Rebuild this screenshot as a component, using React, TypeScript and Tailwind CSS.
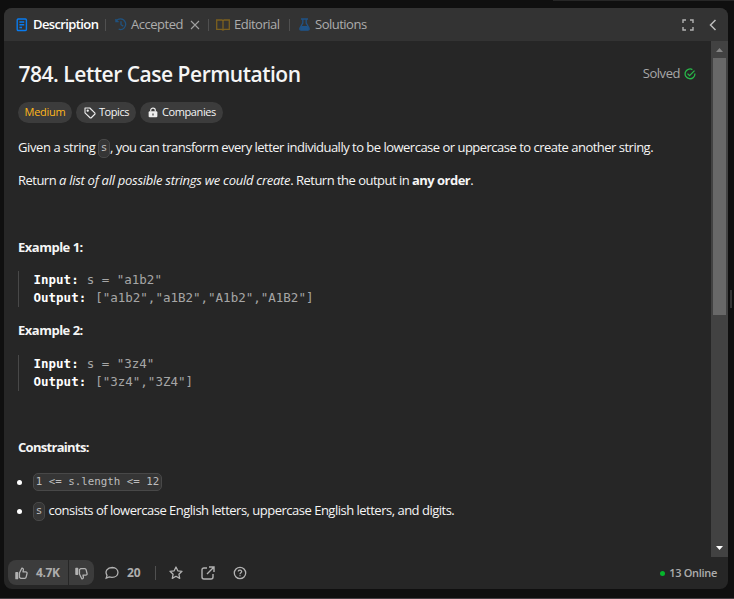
import type { ReactNode } from 'react';

const ui = "font-['Open_Sans','Noto_Sans',sans-serif]";

function Code({ children, wide }: { children: ReactNode; wide?: boolean }) {
  return (
    <code
      className={`inline-flex shrink-0 items-center justify-center rounded-[5px] border border-[#484848] bg-[#353535] font-['DejaVu_Sans_Mono',monospace] text-[10.8px] text-[#bdbdbd] ${wide ? 'h-[18px] w-[129px]' : 'h-[19px] w-3'}`}
    >
      {children}
    </code>
  );
}

function Divider() {
  return <span className="h-3 w-px shrink-0 bg-[#505050]" />;
}

function Example({ input, output }: { input: string; output: string }) {
  return (
    <pre className="h-9 border-l border-[#484848] pl-[14.5px] font-['DejaVu_Sans_Mono',monospace] text-[12.5px] leading-[18px] text-[#a6a6a6]">
      <span className="block"><b className="mr-2 text-white">Input:</b>{input}</span>
      <span className="block"><b className="mr-[9px] text-white">Output:</b>{output}</span>
    </pre>
  );
}

function Thumb() {
  return (
    <svg width="13" height="13" viewBox="0 0 14 14" fill="none" stroke="#b2b2b2" strokeWidth="1.4" strokeLinejoin="round">
      <path d="M1 6.2H2.8V12.6H1Z" fill="#b2b2b2" />
      <path d="M4.8 6.5 7.3 1.3C8.5 1.1 9.3 2 9 3.2L8.6 5.2H11.6C12.6 5.2 13.2 6 13 6.9L12 11C11.8 11.8 11.3 12.2 10.5 12.2H6.4L4.8 11.3Z" />
    </svg>
  );
}

export default function App() {
  return (
    <div className={`relative h-[599px] w-[734px] overflow-hidden border-b border-[#453f43] bg-[#0f0f0f] pl-1 pt-2 ${ui}`}>
      <div className="absolute left-[553px] top-0 h-px w-[181px] bg-[#262626]" />
      <div className="absolute left-[730px] top-[290px] h-[18px] w-[2px] bg-[#343434]" />
      <main className="flex h-[581px] w-[724px] flex-col overflow-hidden rounded-lg bg-[#262626] whitespace-nowrap">
        <header className="flex h-[33px] shrink-0 items-center bg-[#333] text-[13px] text-[#adadad]">
          <svg className="ml-3 shrink-0" width="12" height="14" viewBox="0 0 12 14" fill="none" stroke="#087bef" strokeWidth="1.4">
            <rect x="1.2" y="1" width="9.2" height="11.5" rx="1" />
            <path d="M3.4 4H8.2M3.4 6.8H8.2M3.4 9.5H6" />
          </svg>
          <span className="ml-[5px] w-[65px] font-semibold tracking-[-0.62px] text-white">Description</span>
          <span className="ml-[7px] flex"><Divider /></span>
          <svg className="ml-2 shrink-0" width="14" height="13" viewBox="0 0 15 14" fill="none" stroke="#20527f" strokeWidth="1.4">
            <path d="M2 1V4H5M2.2 4C4-.2 10.2 0 12 4.2C14 9 9.5 13.8 5 12M7.5 3.5V7.2L10 8.7" />
          </svg>
          <span className="ml-[3px] w-[53px] tracking-[-0.48px]">Accepted</span>
          <svg className="ml-[6px] shrink-0" width="10" height="10" viewBox="0 0 10 10" stroke="#a0a0a0" strokeWidth="1.1"><path d="m1 1 8 8M9 1 1 9" /></svg>
          <span className="ml-2 flex"><Divider /></span>
          <svg className="ml-[7px] shrink-0" width="14" height="12" viewBox="0 0 14 12" fill="none" stroke="#7c601f" strokeWidth="1.3">
            <path d="M7 10.8V1.7Q6.4 1 5.6 1H.7V10.3H5.6L7 11 8.4 10.3H13.3V1H8.4Q7.6 1 7 1.7" />
          </svg>
          <span className="ml-1 w-[47px] tracking-[-0.5px]">Editorial</span>
          <span className="ml-[8px] flex"><Divider /></span>
          <svg className="ml-[9px] shrink-0" width="11" height="13" viewBox="0 0 11 13" fill="none" stroke="#205386" strokeWidth="1.3">
            <path d="M2 1H9M3.8 1V5L1 10Q.3 12 2 12H9Q10.7 12 10 10L7.2 5V1" />
            <path d="M2.4 8H8.6L10.2 11 9 12.3H2L.8 11Z" fill="#205386" stroke="none" />
          </svg>
          <span className="ml-[5px] w-[53px] tracking-[-0.5px]">Solutions</span>
          <svg className="ml-auto shrink-0" width="12" height="12" viewBox="0 0 12 12" fill="none" stroke="#b2b2b2" strokeWidth="1.4"><path d="M1 4V1H4M8 1H11V4M11 8V11H8M4 11H1V8" /></svg>
          <svg className="ml-[15px] mr-[11px] shrink-0" width="8" height="12" viewBox="0 0 8 12" fill="none" stroke="#bdbdbd" strokeWidth="1.5"><path d="M6.5 1 1.5 6 6.5 11" /></svg>
        </header>

        <div className="flex h-[516px] shrink-0">
          <section className="flex w-[707px] flex-col pl-[14px] pr-[15px] text-[13px] text-[#f5f5f5]">
            <div className="mt-[18px] flex h-[30px] items-center justify-between">
              <h1 className="pl-[0.5px] text-[21px] font-semibold leading-[30px] tracking-[-0.48px]">784. Letter Case Permutation</h1>
              <div className="flex items-center text-[13px] text-[#a8a8a8]">
                <span className="tracking-[-0.45px]">Solved</span>
                <svg className="ml-1" width="12" height="12" viewBox="0 0 13 13" fill="none" stroke="#28b849" strokeWidth="1.4"><path d="M9.1 1.7A5.3 5.3 0 1 0 11.8 6M3.8 6.1 6 8.3 11.4 2.8" /></svg>
              </div>
            </div>
            <div className="mt-[13px] flex h-[21px] gap-1 text-[11px]">
              <span className="flex w-[54px] items-center justify-center rounded-full bg-[#3c3c3c] tracking-[-0.25px] text-[#ffb71b]">Medium</span>
              <span className="flex w-[60px] items-center rounded-full bg-[#3c3c3c] pl-2 tracking-[-0.45px]">
                <svg className="mr-[3px]" width="12" height="12" viewBox="0 0 12 12" fill="none" stroke="#eee" strokeWidth="1.1" strokeLinejoin="round"><path d="M1 1H5.8L11 6.2V7L7 11H6.3L1 5.8Z" /><circle cx="3.7" cy="3.7" r=".6" fill="#eee" /></svg>
                Topics
              </span>
              <span className="flex w-[83px] items-center rounded-full bg-[#3c3c3c] pl-2 tracking-[-0.4px]">
                <svg className="mr-1" width="10" height="11" viewBox="0 0 11 12" fill="none"><path d="M3 5V3.4C3 .5 8 .5 8 3.4V5" stroke="#eee" strokeWidth="1.3" /><rect x=".7" y="4.7" width="9.6" height="6.6" rx="1.2" fill="#eee" /><path d="M5.5 7V9.2" stroke="#3c3c3c" strokeWidth="1.3" /></svg>
                Companies
              </span>
            </div>
            <p className="mt-[15px] flex h-5 items-center"><span className="w-[80px] shrink-0 tracking-[-0.4px]">Given a string</span><Code>s</Code><span className="tracking-[-0.51px]">, you can transform every letter individually to be lowercase or uppercase to create another string.</span></p>
            <p className="mt-[13px] h-5 leading-[19px] tracking-[-0.52px]">Return <em className="tracking-[-0.27px]">a list of all possible strings we could create</em>. Return the output in <b>any order</b>.</p>
            <h2 className="mt-[46px] h-5 font-bold leading-5 tracking-[-0.5px]">Example 1:</h2>
            <div className="mt-[14px]"><Example input={'s = "a1b2"'} output={'["a1b2","a1B2","A1b2","A1B2"]'} /></div>
            <h2 className="mt-[13px] h-5 font-bold leading-5 tracking-[-0.5px]">Example 2:</h2>
            <div className="mt-[15px]"><Example input={'s = "3z4"'} output={'["3z4","3Z4"]'} /></div>
            <h2 className="mt-[46px] h-5 font-bold leading-5 tracking-[-0.7px]">Constraints:</h2>
            <ul className="mt-[15px]">
              <li className="flex h-5 items-center"><span className="mr-[11px] -ml-px size-[5px] rounded-full bg-white" /><Code wide>{'1 <= s.length <= 12'}</Code></li>
              <li className="mt-[9px] flex h-5 items-center"><span className="mr-[11px] -ml-px size-[5px] rounded-full bg-white" /><Code>s</Code><span className="ml-[3.5px] tracking-[-0.5px]">consists of lowercase English letters, uppercase English letters, and digits.</span></li>
            </ul>
          </section>
          <div className="flex w-[17px] flex-col items-center bg-[#424242]">
            <svg width="17" height="17" viewBox="0 0 17 17"><path d="M5 11 8.5 7 12 11Z" fill="#858585" /></svg>
            <div className="h-[257px] w-[13px] bg-[#686868]" />
            <svg className="mt-auto" width="17" height="17" viewBox="0 0 17 17"><path d="M5 6H12L8.5 10Z" fill="#fff" /></svg>
          </div>
        </div>

        <footer className="flex h-8 items-center pl-1 text-[12px] font-semibold text-[#adadad]">
          <div className="mb-[2px] flex h-[25px] overflow-hidden rounded-lg">
            <button className="flex w-[60px] items-center bg-[#3c3c3c] pl-[7px] pt-[2px]"><Thumb /><span className="ml-[8px] font-bold tracking-[-0.35px]">4.7K</span></button>
            <button className="ml-px flex w-[25px] items-center justify-center bg-[#3c3c3c] pt-[2px]"><span className="-scale-y-100"><Thumb /></span></button>
          </div>
          <svg className="ml-[11px]" width="14" height="14" viewBox="0 0 14 14" fill="none" stroke="#b2b2b2" strokeWidth="1.3"><path d="M1.2 12.2 2 9.3C-.6 5 2.5 1.5 7.2 1.5C15 1.7 14.8 11.3 7 11.3Q5.3 11.3 4.2 10.9Z" /></svg>
          <span className="ml-[8px] w-4 font-bold">20</span>
          <span className="ml-[12px] h-[14px] w-px bg-[#505050]" />
          <svg className="ml-[13px]" width="14" height="14" viewBox="0 0 14 14" fill="none" stroke="#b2b2b2" strokeWidth="1.3" strokeLinejoin="round"><path d="m7 1 1.8 3.8 4.2.5-3.1 2.9.8 4.2L7 10.3l-3.7 2.1.8-4.2L1 5.3l4.2-.5Z" /></svg>
          <svg className="ml-[18px]" width="14" height="14" viewBox="0 0 14 14" fill="none" stroke="#b2b2b2" strokeWidth="1.4"><path d="M6 2H3Q1 2 1 4V11Q1 13 3 13H10Q12 13 12 11V8M8 1H13V6M13 1 6 8" /></svg>
          <svg className="ml-[18px]" width="14" height="14" viewBox="0 0 14 14" fill="none" stroke="#b2b2b2" strokeWidth="1.3"><circle cx="7" cy="7" r="5.7" /><path d="M5.3 5.6C5.3 3.3 9 3.8 8.6 5.8C8.4 6.7 7 6.8 7 8.2M7 9.2V10.3" /></svg>
          <span className="ml-auto mr-1 size-[5px] rounded-full bg-[#06b52c]" />
          <span className="mr-[11px] text-[11px] tracking-[-0.3px]">13 Online</span>
        </footer>
      </main>
    </div>
  );
}
